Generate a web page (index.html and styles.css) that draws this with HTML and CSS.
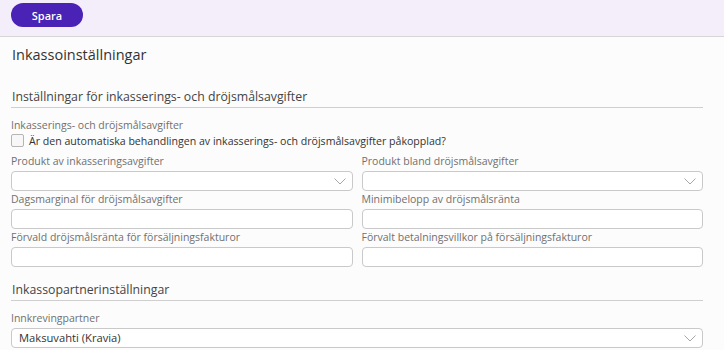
FILE: index.html
```html
<!DOCTYPE html>
<html lang="sv">
<head>
<meta charset="utf-8">
<title>Inkassoinställningar</title>
<link rel="stylesheet" href="styles.css">
</head>
<body>
<div class="topbar">
  <button class="btn-primary" type="button">Spara</button>
</div>
<main class="content">
  <h1 class="page-title">Inkassoinställningar</h1>

  <section class="section">
    <h2 class="section-title">Inställningar för inkasserings- och dröjsmålsavgifter</h2>
    <div class="field field-check">
      <span class="label">Inkasserings- och dröjsmålsavgifter</span>
      <label class="check-row">
        <span class="checkbox"></span>
        <span class="check-text">Är den automatiska behandlingen av inkasserings- och dröjsmålsavgifter påkopplad?</span>
      </label>
    </div>
    <div class="grid">
      <div class="field">
        <span class="label">Produkt av inkasseringsavgifter</span>
        <div class="input select"><span class="value"></span><svg class="chev" viewBox="0 0 12 7" width="12" height="7"><path d="M0.5 0.5 L6 6 L11.5 0.5" fill="none" stroke="#a6a6a6" stroke-width="1"/></svg></div>
      </div>
      <div class="field">
        <span class="label">Produkt bland dröjsmålsavgifter</span>
        <div class="input select"><span class="value"></span><svg class="chev" viewBox="0 0 12 7" width="12" height="7"><path d="M0.5 0.5 L6 6 L11.5 0.5" fill="none" stroke="#a6a6a6" stroke-width="1"/></svg></div>
      </div>
      <div class="field">
        <span class="label">Dagsmarginal för dröjsmålsavgifter</span>
        <div class="input"></div>
      </div>
      <div class="field">
        <span class="label">Minimibelopp av dröjsmålsränta</span>
        <div class="input"></div>
      </div>
      <div class="field">
        <span class="label">Förvald dröjsmålsränta för försäljningsfakturor</span>
        <div class="input"></div>
      </div>
      <div class="field">
        <span class="label">Förvalt betalningsvillkor på försäljningsfakturor</span>
        <div class="input"></div>
      </div>
    </div>
  </section>

  <section class="section section-partner">
    <h2 class="section-title">Inkassopartnerinställningar</h2>
    <div class="field">
      <span class="label">Innkrevingpartner</span>
      <div class="input select"><span class="value">Maksuvahti (Kravia)</span><svg class="chev" viewBox="0 0 12 7" width="12" height="7"><path d="M0.5 0.5 L6 6 L11.5 0.5" fill="none" stroke="#a6a6a6" stroke-width="1"/></svg></div>
    </div>
  </section>
</main>
</body>
</html>
```

FILE: styles.css
```css
* { box-sizing: border-box; }
html, body { margin: 0; padding: 0; }
body {
  background: #fcfcfc;
  font-family: "Open Sans", "Noto Sans", sans-serif;
  color: #333;
  width: 724px;
  height: 350px;
  overflow: hidden;
}
.topbar {
  height: 37px;
  background: #f3eef9;
  border-bottom: 1px solid #d6d6d6;
  padding: 3px 11px 0;
}
.btn-primary {
  display: block;
  width: 72px;
  height: 24px;
  border: none;
  border-radius: 12px;
  background: #4a23b6;
  color: #fff;
  font-family: inherit;
  font-size: 11px;
  font-weight: 600;
  padding: 0;
}
.content {
  padding: 0 21px 0 11px;
}
.page-title {
  margin: 9px 0 0 1px;
  font-size: 14.5px;
  line-height: 18px;
  font-weight: 400;
  color: #333;
}
.section { margin-top: 25px; }
.section-partner { margin-top: 15px; }
.section-title {
  margin: 0;
  padding: 0 0 2px 1px;
  font-size: 12.3px;
  line-height: 16px;
  font-weight: 400;
  color: #444;
  border-bottom: 1px solid #cfcfcf;
}
.field {
  display: flex;
  flex-direction: column;
}
.section > .field { margin-top: 11px; }
.label {
  font-size: 10.5px;
  line-height: 13px;
  color: #707070;
}
.check-row {
  display: flex;
  align-items: center;
  gap: 5px;
  height: 15px;
  margin-top: 1px;
}
.checkbox {
  width: 13px;
  height: 13px;
  border: 1px solid #b5b5b5;
  border-radius: 2px;
  background: #f7f7f7;
  flex: none;
}
.check-text {
  font-size: 10.6px;
  line-height: 14px;
  color: #333;
}
.grid {
  display: grid;
  grid-template-columns: 1fr 1fr;
  column-gap: 9px;
  row-gap: 2px;
  margin-top: 7px;
}
.input {
  height: 20px;
  margin-top: 3px;
  border: 1px solid #c9c9c9;
  border-radius: 4px;
  background: #fff;
}
.select {
  display: flex;
  align-items: center;
  justify-content: space-between;
  padding: 0 6px 0 7px;
}
.value {
  font-size: 11.2px;
  line-height: 14px;
  color: #333;
}
.chev { flex: none; }
```
